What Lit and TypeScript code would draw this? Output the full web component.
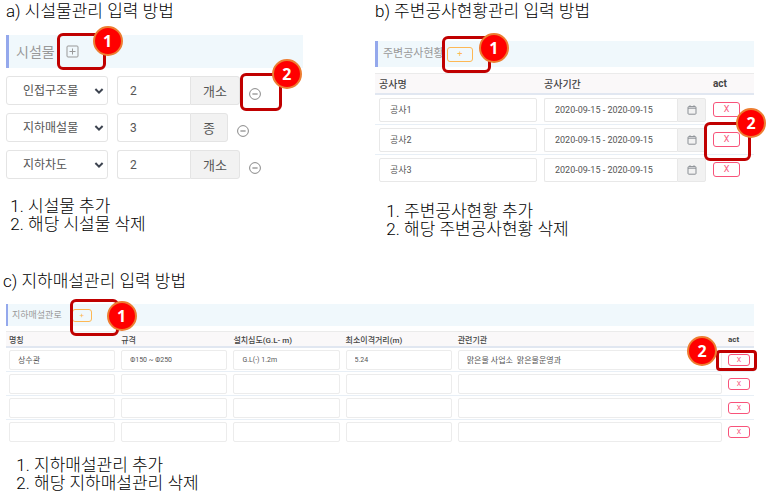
import { LitElement, html, css, svg, nothing } from "lit";
import { customElement } from "lit/decorators.js";

interface Facility { kind: string; count: string; unit: string; }
interface Work { name: string; period: string; }

const KINDS = ["인접구조물", "지하매설물", "지하차도"];

const FACILITIES: Facility[] = [
  { kind: "인접구조물", count: "2", unit: "개소" },
  { kind: "지하매설물", count: "3", unit: "종" },
  { kind: "지하차도", count: "2", unit: "개소" },
];

const WORKS: Work[] = [
  { name: "공사1", period: "2020-09-15 - 2020-09-15" },
  { name: "공사2", period: "2020-09-15 - 2020-09-15" },
  { name: "공사3", period: "2020-09-15 - 2020-09-15" },
];

const PIPE_COLUMNS = ["명칭", "규격", "설치심도(G.L- m)", "최소이격거리(m)", "관련기관"];

const PIPES: string[][] = [
  ["상수관", "Φ150 ~ Φ250", "G.L(-) 1.2m", "5.24", "맑은물 사업소  맑은물운영과"],
  ["", "", "", "", ""],
  ["", "", "", "", ""],
  ["", "", "", "", ""],
];

const plusSquare = html`<svg width="13" height="13" viewBox="0 0 13 13" fill="none" stroke="currentColor" aria-hidden="true">
  ${svg`<rect x="1" y="1" width="11" height="11" rx="1"/><path d="M6.5 3.5v6M3.5 6.5h6"/>`}
</svg>`;

const minusCircle = html`<svg width="12" height="12" viewBox="0 0 12 12" fill="none" stroke="currentColor" aria-hidden="true">
  ${svg`<circle cx="6" cy="6" r="5.4"/><path d="M3.4 6h5.2" stroke-width="1.2"/>`}
</svg>`;

const chevron = html`<svg class="chevron" width="10" height="8" viewBox="0 0 10 8" fill="none" stroke="currentColor" stroke-width="2" aria-hidden="true">
  ${svg`<path d="M1.4 2 5 5.6 8.6 2"/>`}
</svg>`;

const calendar = html`<svg width="10" height="10" viewBox="0 0 10 10" fill="none" stroke="currentColor" aria-hidden="true">
  ${svg`<rect x="1" y="1.6" width="8" height="7.6" rx="0.8"/><path d="M1 3.2h8M3 0.3v1.4M7 0.3v1.4"/>`}
</svg>`;

@customElement("app-root")
export class AppRoot extends LitElement {
  static styles = css`
    :host {
      display: block;
      background: #fff;
      color: #000;
      font-family: Roboto, "Noto Sans CJK KR", sans-serif;
    }
    * { box-sizing: border-box; }
    h2, h3, ol { margin: 0; font-weight: 400; }
    h2, ol { font-size: 17px; font-weight: 300; }
    h2 { line-height: 22px; white-space: nowrap; }
    ol { line-height: 18px; white-space: nowrap; }
    button, input, select { font: inherit; color: inherit; margin: 0; }
    button { padding: 0; border: 0; background: none; display: block; cursor: pointer; }
    svg { display: block; }

    .top {
      display: grid;
      grid-template-columns: 297fr 379fr;
      gap: 72px;
      padding: 0 21px 0 6px;
    }
    .bottom { padding: 0 21px 0 6px; margin-top: 32px; }
    .bottom h2 { margin-left: -3px; }

    .banner {
      display: flex;
      align-items: center;
      background: #f0f8fc;
      border-left: 3px solid #94a8ec;
      color: #999;
    }
    .facility .banner { height: 33px; margin-top: 13px; padding-left: 7px; gap: 11px; font-size: 14px; }
    .work .banner { height: 26px; margin-top: 19px; padding-left: 5px; gap: 3px; font-size: 11px; }
    .bottom .banner { height: 22px; margin-top: 12px; padding-left: 4px; gap: 10px; font-size: 9px; border-left-width: 2px; }
    .banner h3 { font-size: inherit; line-height: 16px; white-space: nowrap; }

    .rows { display: grid; gap: 8px; margin-top: 8px; font-size: 12px; color: #555; }
    .row { display: flex; height: 29px; }
    .pick { position: relative; width: 102px; }
    select {
      appearance: none;
      width: 100%;
      height: 100%;
      padding: 0 20px 0 16px;
      border: 1px solid #e4e4e4;
      border-radius: 3px;
      background: #fff;
    }
    .chevron { position: absolute; right: 4px; top: 11px; color: #3d4450; pointer-events: none; }
    .count {
      width: 73px;
      margin-left: 9px;
      padding: 0 12px;
      border: 1px solid #e4e4e4;
      border-right: 0;
      border-radius: 3px 0 0 3px;
      background: #fff;
      font-size: 12px;
    }
    .unit {
      display: flex;
      align-items: center;
      padding: 0 12px;
      border: 1px solid #e4e4e4;
      border-radius: 0 3px 3px 0;
      background: #f2f2f2;
      font-size: 13px;
    }
    .remove { align-self: flex-end; margin: 0 0 5px 9px; color: #888; }

    table { width: 100%; table-layout: fixed; border-collapse: separate; border-spacing: 0; color: #555; }
    th {
      text-align: left;
      font-weight: 500;
      color: #444;
      background: #faf8f9;
      border-top: 1px solid #ebebeb;
      border-bottom: 2px solid #e1e7f1;
      padding: 0 0 0 4px;
      white-space: nowrap;
    }
    td { padding: 0 3px 0 4px; border-bottom: 1px solid #e8eff6; }
    tr:last-child td { border-bottom-color: transparent; }
    .field {
      display: block;
      width: 100%;
      min-width: 0;
      border: 1px solid #e8e8e8;
      border-radius: 2px;
      background: #fff;
    }
    .works { margin-top: 6px; font-size: 9px; }
    .works th { height: 22px; font-size: 10px; }
    .works td { height: 30px; }
    .works .field { height: 24px; padding: 0 10px; }
    .period { width: 169px; }
    .work-act { width: 45px; font-weight: 700; }
    .date { display: flex; }
    .date .field { border-right: 0; border-radius: 2px 0 0 2px; }
    .date button {
      flex: 0 0 29px;
      display: grid;
      place-items: center;
      border: 1px solid #e8e8e8;
      border-radius: 0 2px 2px 0;
      background: #f2f2f2;
      color: #8a8f94;
    }
    .pipes { margin-top: 5px; font-size: 8px; }
    .pipes th { height: 17px; padding-left: 3px; }
    .pipes td { height: 24px; padding: 0 3px; }
    .pipes .field { height: 20px; padding: 0 8px; white-space: pre; border-color: #ececec; }
    .pipes .measure { font-size: 7px; }
    .narrow { width: 15%; }
    .pipe-act { width: 29px; font-weight: 700; }

    .add, .del { border: 1px solid; border-radius: 3px; text-align: center; }
    .add { color: #fdb855; }
    .del { color: #f8537a; }
    .work .add { width: 26px; height: 15px; font-size: 9px; line-height: 13px; }
    .work .del { width: 27px; height: 15px; font-size: 9px; line-height: 13px; }
    .bottom .add { width: 20px; height: 13px; font-size: 8px; line-height: 11px; }
    .bottom .del { width: 22px; height: 12px; font-size: 7px; line-height: 10px; }

    /* Numbered callouts laid over the controls they explain */
    .spot { position: relative; display: block; width: fit-content; }
    .frame, .badge { position: absolute; pointer-events: none; }
    .frame { width: 49px; height: 37px; border: 3px solid #c00000; border-radius: 6px; z-index: 1; }
    .badge {
      z-index: 2;
      width: 30px;
      height: 30px;
      border: 2px solid #ed7d31;
      border-radius: 50%;
      background: #f00;
      color: #fff;
      font: 700 16px/26px "Noto Sans", sans-serif;
      text-align: center;
    }
    .a1 .frame { left: -9px; top: -12px; }
    .a1 .badge { left: 27px; top: -19px; }
    .a2 .frame { left: -9px; top: -15px; width: 42px; height: 38px; }
    .a2 .badge { left: 23px; top: -29px; }
    .b1 .frame { left: -5px; top: -11px; }
    .b1 .badge { left: 32px; top: -14px; }
    .b2 .frame { left: -9px; top: -10px; width: 47px; height: 39px; }
    .b2 .badge { left: 23px; top: -24px; }
    .c1 .frame { left: -2px; top: -10px; }
    .c1 .badge { left: 35px; top: -8px; }
    .c2 .frame { left: -12px; top: -4px; width: 41px; height: 21px; border-radius: 4px; }
    .c2 .badge { left: -41px; top: -18px; }

    .facility ol { margin-top: 18px; padding-left: 22px; }
    .work ol { margin-top: 17px; padding-left: 29px; }
    .bottom ol { margin-top: 12px; padding-left: 28px; }
  `;

  private callout(n: number) {
    return html`<span class="frame"></span><span class="badge">${n}</span>`;
  }

  private facilityRow(f: Facility, i: number) {
    return html`<div class="row">
      <span class="pick">
        <select aria-label="시설물 종류">
          ${KINDS.map((k) => html`<option ?selected=${k === f.kind}>${k}</option>`)}
        </select>${chevron}
      </span>
      <input class="count" id="count${i}" aria-label="수량" .value=${f.count}>
      <label class="unit" for="count${i}">${f.unit}</label>
      <span class="spot remove ${i === 0 ? "a2" : ""}">
        <button aria-label="삭제">${minusCircle}</button>
        ${i === 0 ? this.callout(2) : nothing}
      </span>
    </div>`;
  }

  private workRow(w: Work, i: number) {
    return html`<tr>
      <td><input class="field" aria-label="공사명" .value=${w.name}></td>
      <td><div class="date">
        <input class="field" aria-label="공사기간" .value=${w.period}>
        <button aria-label="달력">${calendar}</button>
      </div></td>
      <td><span class="spot ${i === 1 ? "b2" : ""}">
        <button class="del">X</button>${i === 1 ? this.callout(2) : nothing}
      </span></td>
    </tr>`;
  }

  private pipeRow(cells: string[], i: number) {
    return html`<tr>
      ${cells.map((c, n) => html`<td><input class="field ${n > 0 && n < 4 ? "measure" : ""}" aria-label=${PIPE_COLUMNS[n]} .value=${c}></td>`)}
      <td><span class="spot ${i === 0 ? "c2" : ""}">
        <button class="del">X</button>${i === 0 ? this.callout(2) : nothing}
      </span></td>
    </tr>`;
  }

  render() {
    return html`
      <div class="top">
        <section class="facility">
          <h2>a) 시설물관리 입력 방법</h2>
          <div class="banner">
            <h3>시설물</h3>
            <span class="spot a1"><button aria-label="추가">${plusSquare}</button>${this.callout(1)}</span>
          </div>
          <div class="rows">${FACILITIES.map((f, i) => this.facilityRow(f, i))}</div>
          <ol><li>시설물 추가</li><li>해당 시설물 삭제</li></ol>
        </section>

        <section class="work">
          <h2>b) 주변공사현황관리 입력 방법</h2>
          <div class="banner">
            <h3>주변공사현황</h3>
            <span class="spot b1"><button class="add">+</button>${this.callout(1)}</span>
          </div>
          <table class="works">
            <thead><tr>
              <th>공사명</th><th class="period">공사기간</th><th class="work-act">act</th>
            </tr></thead>
            <tbody>${WORKS.map((w, i) => this.workRow(w, i))}</tbody>
          </table>
          <ol><li>주변공사현황 추가</li><li>해당 주변공사현황 삭제</li></ol>
        </section>
      </div>

      <section class="bottom">
        <h2>c) 지하매설관리 입력 방법</h2>
        <div class="banner">
          <h3>지하매설관로</h3>
          <span class="spot c1"><button class="add">+</button>${this.callout(1)}</span>
        </div>
        <table class="pipes">
          <thead><tr>
            ${PIPE_COLUMNS.map((c, n) => html`<th class=${n < 4 ? "narrow" : ""}>${c}</th>`)}
            <th class="pipe-act">act</th>
          </tr></thead>
          <tbody>${PIPES.map((p, i) => this.pipeRow(p, i))}</tbody>
        </table>
        <ol><li>지하매설관리 추가</li><li>해당 지하매설관리 삭제</li></ol>
      </section>
    `;
  }
}
